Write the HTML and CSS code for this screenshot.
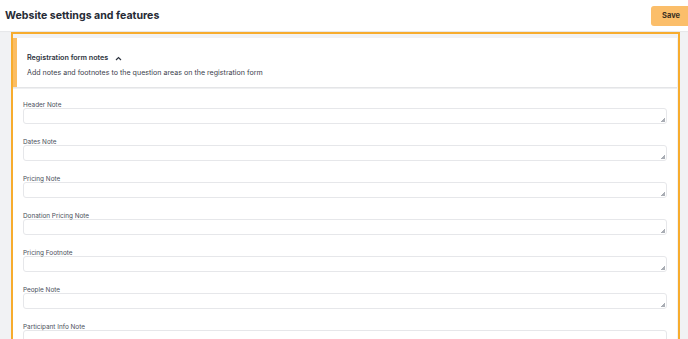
FILE: index.html
```html
<!DOCTYPE html>
<html>
<head>
<meta charset="utf-8">
<title>Website settings and features</title>
<link rel="stylesheet" href="styles.css">
</head>
<body>
    <div class="top-bar">
        <h1 class="page-title">Website settings and features</h1>
        <button class="save-btn">Save</button>
    </div>

    <div class="content">
        <div class="highlight-box">
            <div class="notes-card">
                <div class="notes-title">
                    <span>Registration form notes</span>
                    <svg class="chevron" width="7" height="5" viewBox="0 0 7 5"><path d="M1 4 L3.5 1.5 L6 4" fill="none" stroke="#2e3440" stroke-width="1.2"/></svg>
                </div>
                <div class="notes-desc">Add notes and footnotes to the question areas on the registration form</div>
            </div>

            <div class="fields-panel">
                <div class="field">
                    <label>Header Note</label>
                    <textarea></textarea>
                </div>
                <div class="field">
                    <label>Dates Note</label>
                    <textarea></textarea>
                </div>
                <div class="field">
                    <label>Pricing Note</label>
                    <textarea></textarea>
                </div>
                <div class="field">
                    <label>Donation Pricing Note</label>
                    <textarea></textarea>
                </div>
                <div class="field">
                    <label>Pricing Footnote</label>
                    <textarea></textarea>
                </div>
                <div class="field">
                    <label>People Note</label>
                    <textarea></textarea>
                </div>
                <div class="field">
                    <label>Participant Info Note</label>
                    <textarea></textarea>
                </div>
            </div>
        </div>
    </div>
</body>
</html>
```

FILE: styles.css
```css
body {
    margin: 0;
    height: 339px;
    overflow: hidden;
    background: #f1f2f4;
    font-family: Inter, "Noto Sans", sans-serif;
    color: #2e3440;
}

.top-bar {
    display: flex;
    justify-content: space-between;
    align-items: center;
    height: 31px;
    padding-left: 5px;
    background: #ffffff;
    box-shadow: 0 1px 1px rgba(0, 0, 0, 0.04);
}

.page-title {
    margin: 0;
    font-size: 10.6px;
    font-weight: 700;
    color: #262b35;
}

.save-btn {
    height: 20px;
    width: 40px;
    margin-right: -3px;
    border: none;
    border-radius: 3px;
    background: #fbbe6a;
    color: #3a3022;
    font-family: Inter, sans-serif;
    font-size: 7.5px;
    font-weight: 700;
}

.content {
    padding-top: 1px;
    padding-left: 11px;
}

.highlight-box {
    width: 664px;
    height: 303px;
    overflow: hidden;
    border: 2px solid #f7ac2e;
    padding-top: 4px;
    padding-right: 1px;
    background: #f1f2f4;
}

.notes-card {
    height: 49px;
    box-sizing: border-box;
    padding: 15px 10px 0 10px;
    border-left: 4px solid #fbbd63;
    background: #ffffff;
    box-shadow: 0 1px 1px rgba(0, 0, 0, 0.05);
}

.notes-title {
    display: flex;
    align-items: center;
    gap: 7px;
    font-size: 7.2px;
    font-weight: 600;
    line-height: 10px;
    color: #2e3440;
}

.notes-desc {
    margin-top: 5px;
    font-size: 7.1px;
    line-height: 10px;
    color: #3b414c;
}

.fields-panel {
    margin-top: 2px;
    padding: 11px 10px 0 10px;
    background: #ffffff;
    height: 260px;
}

.field {
    margin-bottom: 13px;
}

.field label {
    display: block;
    height: 8px;
    font-size: 6.4px;
    line-height: 10px;
    color: #4a505b;
}

.field textarea {
    display: block;
    width: 100%;
    height: 16px;
    box-sizing: border-box;
    margin: 0;
    border: 1px solid #e6e7ea;
    border-radius: 3px;
    background: #ffffff linear-gradient(135deg, transparent 50%, #a9adb4 50%) no-repeat right 1px bottom 1px / 4px 4px;
    resize: none;
}
```
